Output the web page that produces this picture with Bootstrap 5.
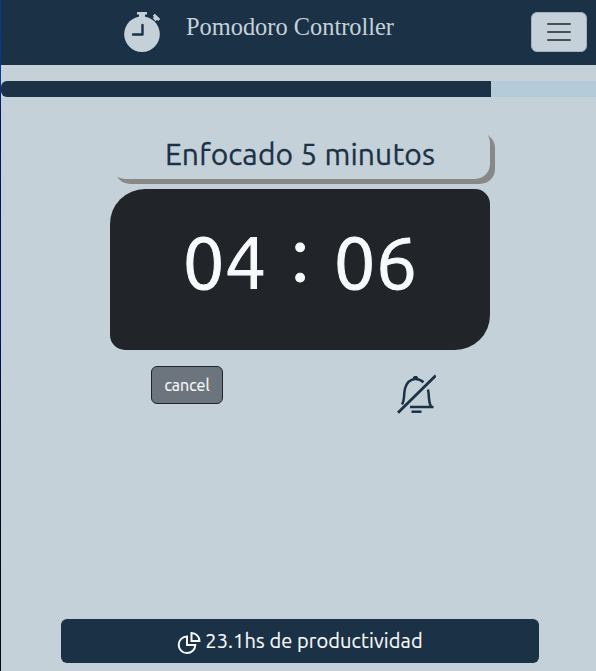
<!DOCTYPE html>
<html lang="es">
<head>
<meta charset="utf-8">
<meta name="viewport" content="width=device-width, initial-scale=1">
<title>Pomodoro Controller</title>
<link href="https://cdn.jsdelivr.net/npm/bootstrap@5.3.0/dist/css/bootstrap.min.css" rel="stylesheet">
<style>
  :root { --navy: #1a3146; --mist: #c5d1d9; }
  body { background: var(--mist); color: var(--navy); font-family: Ubuntu, "Noto Sans", sans-serif; height: 671px; overflow: hidden; }
  .edge { width: 1px; background: linear-gradient(#0a3a8c, #0537a8 12%, #02155e 17%, #00186a 50%, #000c30 60%, #05070c 100%); }
  .topbar { background: var(--navy); height: 65px; padding: 0 8px 0 122px; }
  .brand-name { font-family: "Liberation Serif", serif; font-size: 24.4px; line-height: 30px; color: var(--mist); margin: 12px 0 0 25px; }
  .menu-btn { width: 56px; height: 40px; margin-top: 12px; margin-right: 1px; padding: 0; background: var(--mist); border: 1px solid #a5b2bb; }
  .session-progress { width: 600px; height: 16px; margin-top: 16px; background: #b4ccd9; }
  .session-progress .progress-bar { background: var(--navy); }
  .timer { width: 380px; margin: 31px 0 0 109px; }
  .session-title { height: 51px; border-radius: 15px; box-shadow: 5px 5px #888; font-size: 30px; letter-spacing: .14px; line-height: 53px; -webkit-text-stroke: .3px currentColor; }
  .clock { height: 161px; margin-top: 10px; border-radius: 35px 15px; font-size: 74px; line-height: 100px; padding-top: 23px; -webkit-text-stroke: 1px #f8f9fa; }
  .digits { width: 90px; }
  .colon { width: 61px; margin-top: -8px; }
  .actions { width: 285px; margin: 16px 0 0 150px; }
  .cancel-btn { width: 72px; height: 38px; padding: 0; border: 1px solid #212529; background: #6c757d; color: #f8f9fa; font-size: 16px; -webkit-text-stroke: .2px currentColor; }
  .stats { width: 478px; height: 44px; margin: auto 0 8px 60px; background: var(--navy); color: #f8f9fa; font-size: 20px; border-radius: 6px; }
  .stats-icon { margin-top: 3px; }
  .stats-label { letter-spacing: .1px; -webkit-text-stroke: .15px currentColor; }
</style>
</head>
<body class="d-flex">
<div class="edge flex-shrink-0"></div>
<div class="d-flex flex-column flex-grow-1 overflow-hidden">
  <header class="topbar d-flex align-items-start flex-shrink-0">
    <svg class="mt-2 flex-shrink-0" width="38" height="48" viewBox="0 0 38 48" aria-hidden="true">
      <g fill="#c5d1d9"><circle cx="19" cy="26.2" r="17.8"/><path d="M14 4h10v2.500h-2V10h-6V6.500h-2zM29.800 10l1.200-1-1.200-1.300 2-2 5.400 5.300-2 2-1.200-1.200-1.500 1.500z"/></g>
      <path d="M19.500 17v9.500h-9.500" fill="none" stroke="#1a3146" stroke-width="2.400" stroke-linecap="round" stroke-linejoin="round"/>
    </svg>
    <span class="brand-name text-nowrap">Pomodoro Controller</span>
    <button class="btn menu-btn ms-auto d-flex align-items-center justify-content-center" type="button" aria-label="Menu">
      <svg width="24" height="20" viewBox="0 0 24 20" stroke="#484f56" stroke-width="2" stroke-linecap="round"><path d="M1 2h22M1 10h22M1 18h22"/></svg>
    </button>
  </header>
  <div class="progress session-progress flex-shrink-0"><div class="progress-bar" style="width:81.67%"></div></div>
  <main class="timer">
    <div class="session-title text-center text-nowrap"><span>Enfocado 5 minutos</span></div>
    <div class="clock text-bg-dark d-flex justify-content-center align-items-start text-center">
      <span class="digits text-light">04</span><span class="colon text-light">:</span><span class="digits text-light">06</span>
    </div>
  </main>
  <div class="actions d-flex justify-content-between">
    <button class="btn cancel-btn" type="button">cancel</button>
    <svg class="mt-2" width="40" height="40" viewBox="0 0 40 40" fill="none" stroke="#1a3146" aria-label="Silenciado">
      <path d="M2 38.800L39.800 1.500" stroke-width="2.800"/>
      <path d="M6 30.500C9 26 7.500 20 9 14.500C10.500 9 14 5.500 19 5C22 4.800 25 6 27.500 8.200M32 15.500C33.500 22 32 27 35 32.500M14 33h23.500" stroke-width="2.500"/>
      <path d="M15.500 37.700h10" stroke-width="2.500"/><path d="M17 4.500l1-2h3l1 2z" fill="#1a3146"/>
    </svg>
  </div>
  <footer class="stats d-flex align-items-center justify-content-center flex-shrink-0">
    <svg class="me-1 stats-icon" width="24" height="24" viewBox="0 0 24 24" fill="none" stroke="#f8f9fa" stroke-width="2" aria-hidden="true">
      <path d="M10 5.500A8.300 8.300 0 1 0 18.300 14H10zM14.500 2v8h8A8 8 0 0 0 14.500 2z"/>
    </svg>
    <span class="stats-label text-nowrap">23.1hs de productividad</span>
  </footer>
</div>
<script src="https://cdn.jsdelivr.net/npm/bootstrap@5.3.0/dist/js/bootstrap.bundle.min.js"></script>
</body>
</html>
